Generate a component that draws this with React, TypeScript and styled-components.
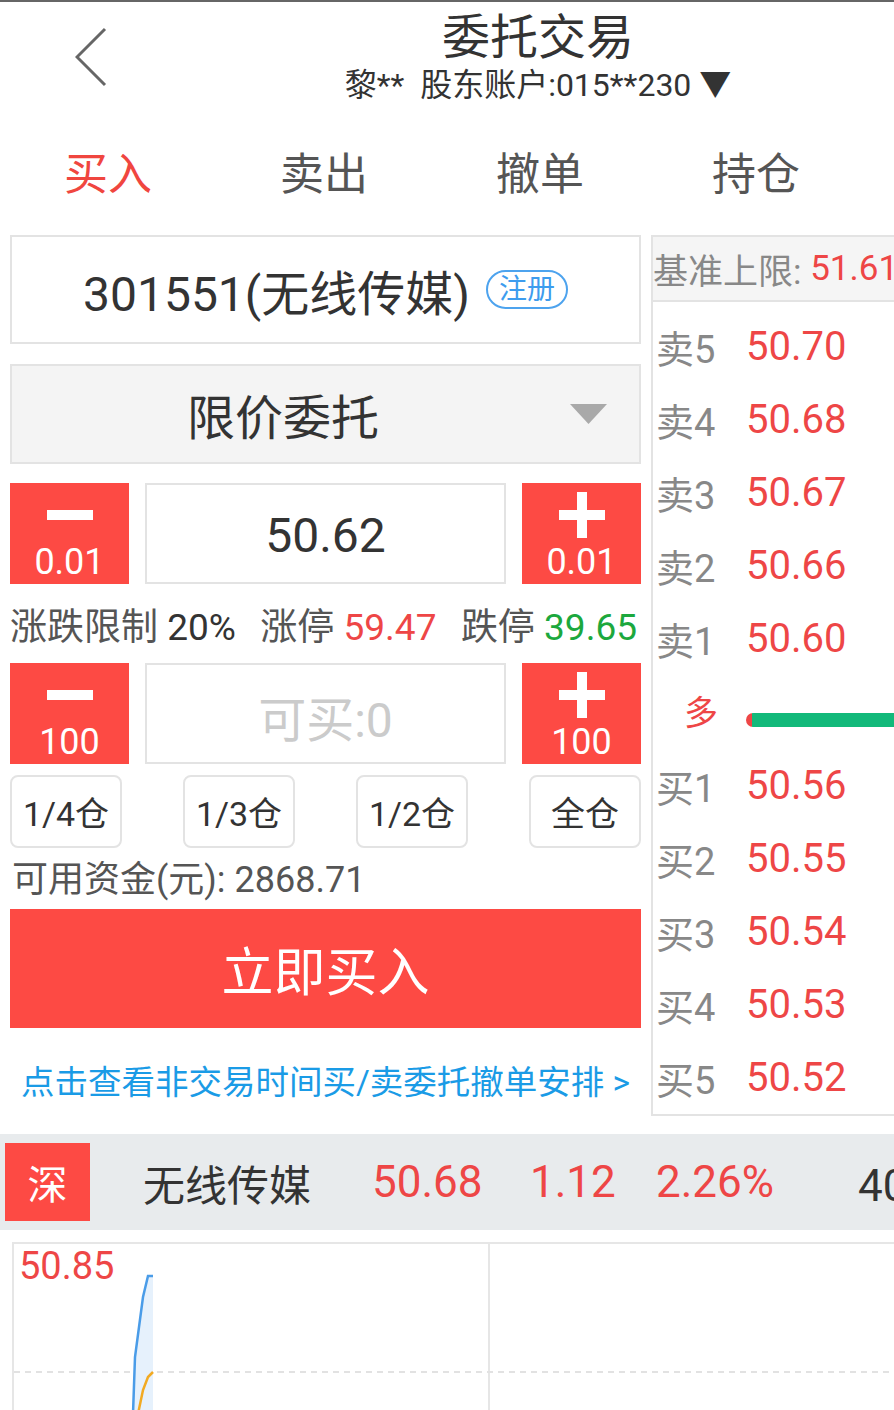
import React from 'react'
import styled, {createGlobalStyle} from 'styled-components'

const RED = '#fd4a44'
const PRICE_RED = '#ee4646'
const LINE = '#e3e3e3'

const GlobalStyle = createGlobalStyle`
  html, body {
    margin: 0;
    padding: 0;
    background: #fff;
    overflow: hidden;
  }
  body {
    font-family: Roboto, "Noto Sans CJK SC", sans-serif;
    color: #333;
  }
  * {
    box-sizing: border-box;
  }
`

interface iLevel {
  label: string
  price: string
}

const asks: iLevel[] = [
  {label: '卖5', price: '50.70'},
  {label: '卖4', price: '50.68'},
  {label: '卖3', price: '50.67'},
  {label: '卖2', price: '50.66'},
  {label: '卖1', price: '50.60'},
]

const bids: iLevel[] = [
  {label: '买1', price: '50.56'},
  {label: '买2', price: '50.55'},
  {label: '买3', price: '50.54'},
  {label: '买4', price: '50.53'},
  {label: '买5', price: '50.52'},
]

const tabs = ['买入', '卖出', '撤单', '持仓']
const portions = ['1/4仓', '1/3仓', '1/2仓', '全仓']

const StepIcon = ({plus}: {plus?: boolean}) => (
  <svg width="46" height="46" viewBox="0 0 46 46">
    <rect x="0" y="18" width="46" height="10" fill="#fff" />
    {plus && <rect x="18" y="0" width="10" height="46" fill="#fff" />}
  </svg>
)

const App = () => {
  return (
    <Page>
      <GlobalStyle />
      <TopLine />
      <Header>
        <BackSlot>
          <svg width="34" height="60" viewBox="0 0 34 60">
            <polyline points="30,2 2,30 30,58" fill="none" stroke="#666" strokeWidth="3" />
          </svg>
        </BackSlot>
        <TitleBlock>
          <Title>委托交易</Title>
          <Sub>{'黎**  股东账户:015**230 ▼'}</Sub>
        </TitleBlock>
      </Header>

      <Tabs>
        {tabs.map((t, i) => (
          <Tab key={t} $active={i === 0}>{t}</Tab>
        ))}
      </Tabs>

      <Main>
        <LeftCol>
          <StockBox>
            301551(无线传媒)
            <Badge>注册</Badge>
          </StockBox>

          <Dropdown>
            <DropLabel>限价委托</DropLabel>
            <svg width="37" height="20" viewBox="0 0 37 20">
              <polygon points="0,0 37,0 18.5,20" fill="#a9a9a9" />
            </svg>
          </Dropdown>

          <StepRow>
            <StepButton>
              <StepIcon />
              <StepLabel>0.01</StepLabel>
            </StepButton>
            <Field>50.62</Field>
            <StepButton>
              <StepIcon plus />
              <StepLabel>0.01</StepLabel>
            </StepButton>
          </StepRow>

          <LimitRow>
            <span><Tone $c="#555">涨跌限制</Tone> 20%</span>
            <span><Tone $c="#555">涨停</Tone> <Tone $c={PRICE_RED}>59.47</Tone></span>
            <span><Tone $c="#555">跌停</Tone> <Tone $c="#1ca83d">39.65</Tone></span>
          </LimitRow>

          <StepRow $top={0}>
            <StepButton>
              <StepIcon />
              <StepLabel>100</StepLabel>
            </StepButton>
            <Field $placeholder>可买:0</Field>
            <StepButton>
              <StepIcon plus />
              <StepLabel>100</StepLabel>
            </StepButton>
          </StepRow>

          <PortionRow>
            {portions.map((p) => (
              <PortionButton key={p}>{p}</PortionButton>
            ))}
          </PortionRow>

          <Funds>可用资金(元): 2868.71</Funds>

          <BuyButton>立即买入</BuyButton>

          <Notice>点击查看非交易时间买/卖委托撤单安排 &gt;</Notice>
        </LeftCol>

        <RightCol>
          <BookHead>
            基准上限:<Tone $c={PRICE_RED}>&nbsp;51.61</Tone>
          </BookHead>
          <BookBody>
            {asks.map((a) => (
              <BookRow key={a.label}>
                <BookLabel>{a.label}</BookLabel>
                <BookPrice>{a.price}</BookPrice>
              </BookRow>
            ))}
            <DuoRow>
              <Duo>多</Duo>
              <Bar />
            </DuoRow>
            {bids.map((b) => (
              <BookRow key={b.label}>
                <BookLabel>{b.label}</BookLabel>
                <BookPrice>{b.price}</BookPrice>
              </BookRow>
            ))}
          </BookBody>
        </RightCol>
      </Main>

      <QuoteBar>
        <Market>深</Market>
        <QuoteCell $w={229} $size={42}>无线传媒</QuoteCell>
        <QuoteCell $w={158} $c={PRICE_RED}>50.68</QuoteCell>
        <QuoteCell $w={126} $c={PRICE_RED}>1.12</QuoteCell>
        <QuoteCell $w={202} $c={PRICE_RED}>2.26%</QuoteCell>
        <QuoteCell $w={200}>40.5万</QuoteCell>
      </QuoteBar>

      <Chart>
        <ChartHigh>50.85</ChartHigh>
        <svg width="900" height="170" viewBox="0 0 900 170">
          <line x1="475" y1="0" x2="475" y2="170" stroke="#e6e6e6" strokeWidth="2" />
          <line x1="0" y1="128" x2="900" y2="128" stroke="#e2e2e2" strokeWidth="2" strokeDasharray="6 5" />
          <polygon points="121,113 129,53 134,32 139,32 139,170 119,170" fill="#e6f1fc" />
          <polyline points="119,170 121,113 129,53 134,32 139,32" fill="none" stroke="#4a9ce8" strokeWidth="2.5" />
          <polyline points="124,170 129,146 134,133 139,128" fill="none" stroke="#f2aa22" strokeWidth="2.5" />
        </svg>
      </Chart>
    </Page>
  )
}

export default App

const Page = styled.div`
  width: 894px;
  height: 1410px;
  overflow: hidden;
  background: #fff;
`
const TopLine = styled.div`
  height: 2px;
  background: #666;
`
const Header = styled.div`
  display: flex;
  height: 118px;
`
const BackSlot = styled.div`
  width: 182px;
  flex-shrink: 0;
  padding: 25px 0 0 75px;
  svg {
    display: block;
  }
`
const TitleBlock = styled.div`
  flex: 1;
  display: flex;
  flex-direction: column;
  align-items: center;
  padding-top: 8px;
`
const Title = styled.div`
  font-size: 48px;
  line-height: 56px;
  color: #333;
`
const Sub = styled.div`
  margin-top: 1px;
  font-size: 32px;
  line-height: 36px;
  color: #333;
  white-space: pre;
`
const Tabs = styled.div`
  display: flex;
  height: 108px;
  padding-bottom: 6px;
`
const Tab = styled.div<{$active?: boolean}>`
  width: 216px;
  display: flex;
  justify-content: center;
  align-items: center;
  font-size: 44px;
  color: ${(p) => (p.$active ? '#f0463f' : '#555')};
`
const Main = styled.div`
  display: flex;
  align-items: flex-start;
  gap: 10px;
  margin-top: 7px;
  padding-left: 10px;
`
const LeftCol = styled.div`
  width: 631px;
  flex-shrink: 0;
  display: flex;
  flex-direction: column;
`
const StockBox = styled.div`
  height: 109px;
  border: 2px solid ${LINE};
  display: flex;
  justify-content: center;
  align-items: center;
  font-size: 48px;
  color: #333;
`
const Badge = styled.span`
  margin-left: 16px;
  height: 39px;
  padding: 0 11px;
  border: 2px solid #4da3ee;
  border-radius: 20px;
  font-size: 28px;
  line-height: 35px;
  color: #3d9cee;
`
const Dropdown = styled.div`
  margin-top: 20px;
  height: 100px;
  background: #f4f4f4;
  border: 2px solid ${LINE};
  display: flex;
  align-items: center;
  svg {
    margin: 0 32px 0 16px;
    flex-shrink: 0;
  }
`
const DropLabel = styled.div`
  flex: 1;
  text-align: center;
  font-size: 48px;
  color: #333;
`
const StepRow = styled.div<{$top?: number}>`
  margin-top: ${(p) => (p.$top ?? 19)}px;
  height: 101px;
  display: flex;
  justify-content: space-between;
`
const StepButton = styled.div`
  width: 119px;
  background: ${RED};
  display: flex;
  flex-direction: column;
  align-items: center;
  padding-top: 9px;
  svg {
    display: block;
  }
`
const StepLabel = styled.div`
  margin-top: 4px;
  font-size: 36px;
  line-height: 40px;
  color: #fff;
`
const Field = styled.div<{$placeholder?: boolean}>`
  width: 361px;
  border: 2px solid ${LINE};
  display: flex;
  justify-content: center;
  align-items: center;
  padding-top: 4px;
  font-size: 48px;
  color: ${(p) => (p.$placeholder ? '#cbcbcb' : '#333')};
`
const LimitRow = styled.div`
  height: 79px;
  display: flex;
  justify-content: space-between;
  align-items: center;
  padding-right: 4px;
  font-size: 37px;
  color: #333;
  white-space: pre;
`
const Tone = styled.span<{$c: string}>`
  color: ${(p) => p.$c};
`
const PortionRow = styled.div`
  margin-top: 11px;
  display: flex;
  justify-content: space-between;
`
const PortionButton = styled.div`
  width: 112px;
  height: 73px;
  border: 2px solid ${LINE};
  border-radius: 8px;
  display: flex;
  justify-content: center;
  align-items: center;
  font-size: 34px;
  color: #333;
`
const Funds = styled.div`
  height: 61px;
  display: flex;
  align-items: center;
  padding: 0 0 6px 2px;
  font-size: 36px;
  color: #555;
`
const BuyButton = styled.div`
  height: 119px;
  background: ${RED};
  display: flex;
  justify-content: center;
  align-items: center;
  font-size: 52px;
  color: #fff;
`
const Notice = styled.div`
  height: 102px;
  display: flex;
  justify-content: center;
  align-items: center;
  font-size: 33.5px;
  color: #1a9be6;
  white-space: nowrap;
`
const RightCol = styled.div`
  width: 320px;
  flex-shrink: 0;
  border-left: 2px solid ${LINE};
  border-top: 2px solid ${LINE};
  border-bottom: 2px solid ${LINE};
`
const BookHead = styled.div`
  height: 65px;
  background: #f5f5f5;
  border-bottom: 2px solid ${LINE};
  display: flex;
  align-items: center;
  font-size: 35px;
  color: #888;
  white-space: nowrap;
`
const BookBody = styled.div`
  padding-top: 8px;
`
const BookRow = styled.div`
  height: 73px;
  display: flex;
  align-items: center;
  padding-left: 3px;
`
const BookLabel = styled.span`
  width: 90px;
  font-size: 38px;
  color: #888;
`
const BookPrice = styled.span`
  font-size: 40px;
  color: ${PRICE_RED};
`
const DuoRow = styled.div`
  height: 74px;
  display: flex;
  align-items: center;
  padding-left: 31px;
`
const Duo = styled.span`
  font-size: 34px;
  color: ${PRICE_RED};
  margin-top: -4px;
`
const Bar = styled.div`
  flex: 1;
  margin: 16px 0 0 28px;
  height: 14px;
  border-radius: 7px 0 0 7px;
  background: linear-gradient(to right, ${PRICE_RED} 0 6px, #12b97a 6px);
`
const QuoteBar = styled.div`
  margin-top: 4px;
  height: 96px;
  background: #e8ebed;
  display: flex;
  align-items: center;
  padding-left: 5px;
  white-space: nowrap;
  overflow: hidden;
`
const Market = styled.div`
  width: 85px;
  height: 78px;
  flex-shrink: 0;
  margin-right: 53px;
  background: ${RED};
  color: #fff;
  font-size: 40px;
  display: flex;
  justify-content: center;
  align-items: center;
`
const QuoteCell = styled.div<{$w: number; $c?: string; $size?: number}>`
  width: ${(p) => p.$w}px;
  flex-shrink: 0;
  font-size: ${(p) => p.$size ?? 44}px;
  color: ${(p) => p.$c ?? '#333'};
`
const Chart = styled.div`
  position: relative;
  margin: 12px 0 0 12px;
  height: 200px;
  border-top: 2px solid #e6e6e6;
  border-left: 2px solid #e6e6e6;
  overflow: hidden;
  svg {
    display: block;
  }
`
const ChartHigh = styled.span`
  position: absolute;
  left: 5px;
  top: 0;
  font-size: 38px;
  line-height: 44px;
  color: ${PRICE_RED};
`
